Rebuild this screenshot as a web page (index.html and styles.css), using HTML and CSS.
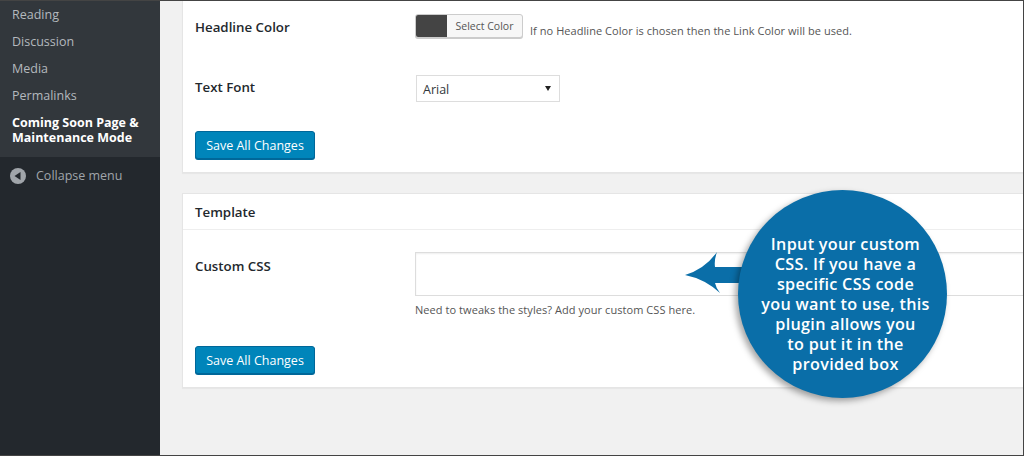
FILE: index.html
```html
<!DOCTYPE html>
<html lang="en">
<head>
<meta charset="utf-8">
<title>Coming Soon Page settings</title>
<link rel="stylesheet" href="styles.css">
</head>
<body>
<div class="app">
  <nav class="sidebar">
    <ul class="menu">
      <li>Reading</li>
      <li>Discussion</li>
      <li>Media</li>
      <li>Permalinks</li>
      <li class="current">Coming Soon Page &amp; Maintenance Mode</li>
    </ul>
    <div class="collapse">
      <svg class="collapse-icon" width="16" height="16" viewBox="0 0 16 16"><circle cx="8" cy="8" r="8" fill="#a0a5aa"/><path d="M10.5 4v8L4.5 8z" fill="#23282d"/></svg>
      <span>Collapse menu</span>
    </div>
  </nav>
  <main class="content">
    <section class="card card-first">
      <div class="row row-color">
        <div class="label">Headline Color</div>
        <div class="field field-color">
          <button class="color-btn" type="button"><span class="swatch"></span><span class="color-text">Select Color</span></button>
          <span class="hint">If no Headline Color is chosen then the Link Color will be used.</span>
        </div>
      </div>
      <div class="row row-font">
        <div class="label">Text Font</div>
        <div class="field">
          <div class="select"><span>Arial</span><span class="caret"></span></div>
        </div>
      </div>
      <button class="save" type="button">Save All Changes</button>
    </section>
    <section class="card card-second">
      <h2 class="card-title">Template</h2>
      <div class="row row-css">
        <div class="label">Custom CSS</div>
        <div class="field field-css">
          <div class="textarea"></div>
          <p class="hint-css">Need to tweaks the styles? Add your custom CSS here.</p>
        </div>
      </div>
      <button class="save" type="button">Save All Changes</button>
    </section>
  </main>
</div>
<svg class="callout-arrow" width="66" height="46" viewBox="0 0 66 46"><path d="M0 25 Q20 19 32 2 Q29 10 30 17 L66 17 L66 33 L30 33 Q31 38 35 43 Q20 29 0 25 Z" fill="#0a6ea8"/></svg>
<div class="callout">
  <p>Input your custom<br>CSS. If you have a<br>specific CSS code<br>you want to use, this<br>plugin allows you<br>to put it in the<br>provided box</p>
</div>
</body>
</html>
```
FILE: styles.css
```css
* { box-sizing: border-box; }
html, body { margin: 0; padding: 0; }
body {
  width: 1024px;
  height: 456px;
  overflow: hidden;
  background: #f1f1f1;
  font-family: "Open Sans", "Liberation Sans", sans-serif;
  color: #23282d;
  position: relative;
}
.app { display: flex; height: 456px; border-top: 1px solid #444; border-right: 1px solid #444; border-bottom: 1px solid #444; }
.sidebar { width: 160px; flex: none; background: #23282d; display: flex; flex-direction: column; }
.menu {
  list-style: none; margin: 0; padding: 1px 0 7px;
  background: #32373c; color: #b4b9be;
  font-size: 12.5px; line-height: 18px;
}
.menu li { padding: 4px 12px 5px; height: 27px; }
.menu .current { height: auto; padding-top: 5px; padding-right: 8px; color: #fff; font-weight: 700; line-height: 15px; }
.collapse { display: flex; align-items: center; gap: 10px; padding: 10px 0 0 10px; color: #a0a5aa; font-size: 12.5px; line-height: 18px; }
.collapse-icon { flex: none; }
.content { flex: 1; padding-left: 22px; min-width: 0; }
.card { background: #fff; border: 1px solid #e5e5e5; border-right: 0; padding: 0 0 0 12px; box-shadow: 0 1px 1px rgba(0,0,0,.04); }
.card-first { height: 172px; border-top: 0; }
.card-second { height: 195px; margin-top: 20px; }
.row { display: flex; }
.label { width: 220px; flex: none; font-size: 13.3px; font-weight: 600; line-height: 20px; color: #23282d; }
.field { flex: 1; min-width: 0; }
.row-color { padding-top: 16px; height: 73px; }
.row-font { height: 57px; padding-top: 3px; }
.row-css { padding-top: 26px; height: 116px; }
.field-color { display: flex; align-items: flex-start; margin-top: -3px; }
.color-btn { display: flex; width: 108px; height: 24px; padding: 0; border: 1px solid #ccc; border-radius: 3px; background: #f7f7f7; box-shadow: 0 1px 0 #ccc; font: inherit; overflow: hidden; }
.swatch { width: 31px; height: 100%; background: #444; }
.color-text { flex: 1; font-size: 10.5px; line-height: 22px; color: #555; text-align: center; }
.hint { font-size: 11px; line-height: 16px; margin: 9px 0 0 7px; color: #555; letter-spacing: .05px; }
.select { display: flex; justify-content: space-between; align-items: center; width: 144px; height: 27px; border: 1px solid #ddd; padding: 1px 8px 0 6px; margin: -2px 0 0 1px; font-size: 12.5px; color: #32373c; }
.caret { width: 0; height: 0; border-left: 3px solid transparent; border-right: 3px solid transparent; border-top: 5px solid #222; margin-top: -2px; }
.save { display: block; width: 120px; height: 28px; padding: 1px 0 0; border: 1px solid #006799; border-radius: 3px; background: #0085ba; color: #fff; font: inherit; font-size: 12.5px; line-height: 26px; box-shadow: 0 1px 0 #006799; }
.card-title { margin: 0 0 0 -12px; padding: 0 0 0 12px; height: 36px; font-size: 13.3px; font-weight: 600; line-height: 36px; border-bottom: 1px solid #eee; }
.textarea { height: 44px; border: 1px solid #ddd; border-right: 0; background: #fff; box-shadow: inset 0 1px 2px rgba(0,0,0,.07); }
.field-css { margin-top: -4px; }
.hint-css { margin: 6px 0 0; font-size: 11px; line-height: 16px; color: #555; letter-spacing: .06px; }
.callout {
  position: absolute; left: 738px; top: 190px; width: 209px; height: 208px;
  padding: 19px 0 0 6px;
  border-radius: 50%; background: #0a6ea8;
  box-shadow: -3px 3px 6px rgba(0,0,0,.35);
  display: flex; align-items: center; justify-content: center;
}
.callout p { margin: 0; color: #fff; font-family: "Open Sans", sans-serif; font-weight: 600; font-size: 16.2px; line-height: 20px; text-align: center; letter-spacing: .3px; }
.callout-arrow { position: absolute; left: 685px; top: 250px; }
```
